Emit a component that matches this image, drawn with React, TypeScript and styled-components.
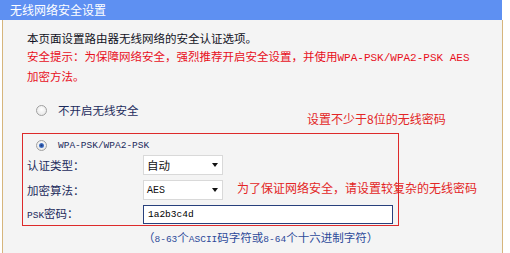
import styled, { createGlobalStyle } from "styled-components";

const GlobalStyle = createGlobalStyle`
  html, body {
    margin: 0;
    padding: 0;
    background: #ffffff;
  }
  body {
    font-family: "Noto Sans CJK SC", "Noto Sans", sans-serif;
    overflow: hidden;
  }
`;

const Page = styled.div`
  width: 510px;
  height: 253px;
  overflow: hidden;
`;

const TitleBar = styled.div`
  width: 502px;
  height: 20px;
  box-sizing: border-box;
  padding-left: 10px;
  background: #5e90f2;
  color: #ffffff;
  font-size: 12px;
  line-height: 20px;
`;

const Panel = styled.div`
  position: relative;
  margin-left: 2px;
  width: 501px;
  min-height: 233px;
  box-sizing: border-box;
  padding: 9px 0 20px 24px;
  border-left: 1px solid #d6b57c;
  border-right: 1px solid #d6b57c;
  background: #f4f4f4;
`;

const Intro = styled.p<{ $warn?: boolean }>`
  margin: 0;
  font-size: 11.5px;
  line-height: 18px;
  color: ${({ $warn }) => ($warn ? "#e8101c" : "#111122")};
`;

const Mono = styled.span<{ $size?: number }>`
  font-family: "Liberation Mono", monospace;
  font-size: ${({ $size }) => $size ?? 10}px;
`;

const OptionRow = styled.div<{ $top?: number }>`
  display: flex;
  align-items: center;
  gap: 11px;
  height: 18px;
  margin-top: ${({ $top }) => $top ?? 0}px;
  padding-left: 9px;
  font-size: 11.5px;
  color: #1c2b5c;
`;

const Radio = styled.span<{ $checked?: boolean }>`
  position: relative;
  flex: none;
  width: 11px;
  height: 11px;
  box-sizing: border-box;
  border-radius: 50%;
  border: 1px solid #a0a0a0;
  background: radial-gradient(circle at 50% 40%, #ffffff 0%, #e2e2e2 100%);

  &::after {
    content: "";
    position: absolute;
    inset: 2px;
    border-radius: 50%;
    background: ${({ $checked }) =>
      $checked ? "radial-gradient(circle, #18367e 0%, #4d82d8 75%)" : "transparent"};
  }
`;

const SecurityBox = styled.div`
  width: 377px;
  box-sizing: border-box;
  margin: 14px 0 0 -5px;
  padding: 1px 0 1px 4px;
  border: 1px solid #dd2a2a;
`;

const FieldRow = styled.div<{ $top: number; $height?: number }>`
  display: grid;
  grid-template-columns: 116px auto;
  align-items: center;
  height: ${({ $height }) => $height ?? 20}px;
  margin-top: ${({ $top }) => $top}px;
  font-size: 11.5px;
  color: #1c2b5c;
`;

const Label = styled.span`
  line-height: 16px;
`;

const SelectBox = styled.div`
  display: flex;
  align-items: center;
  justify-content: space-between;
  width: 80px;
  height: 20px;
  box-sizing: border-box;
  padding: 0 4px 0 3px;
  background: #ffffff;
  border: 1px solid #d9d9d9;
  color: #111111;
  font-size: 11.5px;
`;

const Caret = styled.span`
  width: 0;
  height: 0;
  border-left: 3.5px solid transparent;
  border-right: 3.5px solid transparent;
  border-top: 4px solid #111111;
`;

const TextInput = styled.input<{ $width: number; $height?: number }>`
  width: ${({ $width }) => $width}px;
  height: ${({ $height }) => $height ?? 19}px;
  box-sizing: border-box;
  margin: 0;
  padding: 0 4px;
  background: #ffffff;
  border: 1px solid #28407c;
  color: #000000;
  font-family: "Liberation Mono", monospace;
  font-size: 9.5px;
  outline: none;
`;

const Hint = styled.div`
  margin-top: 2px;
  padding-left: 116px;
  font-size: 11.5px;
  line-height: 18px;
  color: #2d4a9a;
`;

const Callout = styled.div<{ $left: number; $top: number }>`
  position: absolute;
  left: ${({ $left }) => $left}px;
  top: ${({ $top }) => $top}px;
  font-size: 12px;
  line-height: 16px;
  color: #e32626;
  white-space: nowrap;
`;

const Select = ({ value, mono }: { value: string; mono?: boolean }) => (
  <SelectBox>
    {mono ? <Mono $size={10}>{value}</Mono> : <span>{value}</span>}
    <Caret />
  </SelectBox>
);

export default function App() {
  return (
    <Page>
      <GlobalStyle />
      <TitleBar>无线网络安全设置</TitleBar>
      <Panel>
        <Intro>本页面设置路由器无线网络的安全认证选项。</Intro>
        <Intro $warn>
          安全提示：为保障网络安全，强烈推荐开启安全设置，并使用<Mono $size={11}>WPA-PSK/WPA2-PSK AES</Mono>
        </Intro>
        <Intro $warn>加密方法。</Intro>

        <OptionRow $top={16}>
          <Radio />
          <span>不开启无线安全</span>
        </OptionRow>

        <SecurityBox>
          <OptionRow $top={1}>
            <Radio $checked />
            <Mono $size={9.5}>WPA-PSK/WPA2-PSK</Mono>
          </OptionRow>
          <FieldRow $top={1}>
            <Label>认证类型：</Label>
            <Select value="自动" />
          </FieldRow>
          <FieldRow $top={5}>
            <Label>加密算法：</Label>
            <Select value="AES" mono />
          </FieldRow>
          <FieldRow $top={5} $height={19}>
            <Label>
              <Mono $size={9.5}>PSK</Mono>密码：
            </Label>
            <TextInput $width={250} defaultValue="1a2b3c4d" />
          </FieldRow>
        </SecurityBox>

        <Hint>
          （<Mono $size={9.5}>8-63</Mono>个<Mono $size={9.5}>ASCII</Mono>码字符或<Mono $size={9.5}>8-64</Mono>个十六进制字符）
        </Hint>

        <FieldRow $top={3} $height={22}>
          <Label>组密钥更新周期：</Label>
          <TextInput $width={62} $height={20} defaultValue="" />
        </FieldRow>

        <Callout $left={304} $top={91}>设置不少于8位的无线密码</Callout>
        <Callout $left={234} $top={160}>为了保证网络安全，请设置较复杂的无线密码</Callout>
      </Panel>
    </Page>
  );
}
